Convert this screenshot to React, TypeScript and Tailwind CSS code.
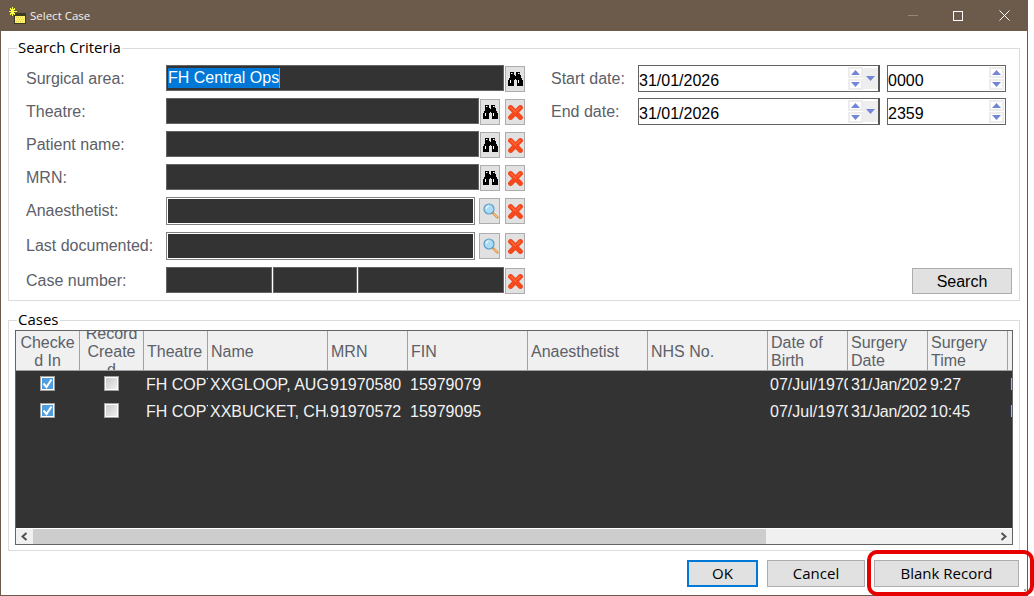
import type { ReactNode } from "react";

const arial = "font-['Liberation_Sans',Arial,sans-serif]";
const segoe = "font-['Open_Sans','Noto_Sans',sans-serif]";

const columns = [
  { label: "Checked In", width: "w-[64px]", center: true },
  { label: "Record Created", width: "w-[64px]", center: true },
  { label: "Theatre", width: "w-[64px]" },
  { label: "Name", width: "w-[120px]" },
  { label: "MRN", width: "w-[80px]" },
  { label: "FIN", width: "w-[120px]" },
  { label: "Anaesthetist", width: "w-[120px]" },
  { label: "NHS No.", width: "w-[120px]" },
  { label: "Date of Birth", width: "w-[80px]" },
  { label: "Surgery Date", width: "w-[80px]", cell: "mr-px w-[79px] pl-[3px] tracking-[-0.35px]" },
  { label: "Surgery Time", width: "w-[80px]" },
];

const rows = [
  ["FH COPT", "XXGLOOP, AUGUSTUS", "91970580", "15979079", "", "", "07/Jul/1970", "31/Jan/2026", "9:27"],
  ["FH COPT", "XXBUCKET, CHARLIE", "91970572", "15979095", "", "", "07/Jul/1970", "31/Jan/2026", "10:45"],
];

function Binoculars() {
  return (
    <svg width="15" height="14" viewBox="0 0 15 14" shapeRendering="crispEdges">
      <path
        fill="#000"
        d="M2 0h4v3h1v1h1V3h0V0h4v3h1v3h1v2h1v6H9V8H8V7H7v1H6v6H0V8h1V6h1z"
      />
      <path fill="#fff" d="M3 1h1v1H3zM10 1h1v1h-1zM2 8h1v3H2zM10 8h1v3h-1z" />
      <path fill="#8a6f9e" d="M4 1h1v1H4zM11 1h1v1h-1z" />
    </svg>
  );
}

function RedCross() {
  return (
    <svg width="15" height="15" viewBox="0 0 15 15">
      <path d="M2.6 2.6 12.4 12.4M12.4 2.6 2.6 12.4" stroke="#f4481e" strokeWidth="5" strokeLinecap="round" />
      <path d="M3 2.5 7.5 7M12 2.5 9 5.5" stroke="#ff6a3c" strokeWidth="1.2" strokeLinecap="round" />
    </svg>
  );
}

function Magnifier() {
  return (
    <svg className="ml-[2px]" width="16" height="16" viewBox="0 0 16 16">
      <path d="M9.8 9.8 14.3 14.3" stroke="#e39a4f" strokeWidth="2.6" strokeLinecap="round" />
      <path d="M11 11 14 14" stroke="#f7d9a0" strokeWidth="0.8" />
      <circle cx="6" cy="6" r="5" fill="#a9dcf6" stroke="#5f9cc4" strokeWidth="1.2" />
      <path d="M3.2 5.6a3 3 0 0 1 2.6-2.6" stroke="#fff" strokeWidth="1.2" fill="none" />
    </svg>
  );
}

function WindowIcon() {
  return (
    <svg width="18" height="18" viewBox="0 0 18 18" shapeRendering="crispEdges">
      <path fill="#3a3a22" d="M5 6h12v11H5z" />
      <path fill="#fff36a" d="M6 9h10v7H6z" />
      <path fill="#d9c94a" d="M7 10h1v1H7zM9 10h1v1H9zM11 10h1v1h-1zM13 10h1v1h-1zM8 12h1v1H8zM10 12h1v1h-1zM12 12h1v1h-1zM14 12h1v1h-1zM7 14h1v1H7zM9 14h1v1H9zM11 14h1v1h-1zM13 14h1v1h-1z" />
      <path fill="#fbff3c" d="M3 0h1v2h1V1h1v2H5v1h3v1H5v1h1v2H5V7H4v2H3V7H2v1H1V6h1V5H0V4h2V3H1V1h1v1h1z" />
    </svg>
  );
}

function Triangle({ down }: { down?: boolean }) {
  return (
    <svg width="9" height="5" viewBox="0 0 9 5">
      <path d={down ? "M0 0h9L4.5 5z" : "M4.5 0 9 5H0z"} fill="#7485d8" />
    </svg>
  );
}

function Spinner() {
  return (
    <div className="flex w-[15px] flex-col gap-px py-px">
      <div className="flex flex-1 items-center justify-center border-2 border-[#ececec] bg-white">
        <Triangle />
      </div>
      <div className="flex flex-1 items-center justify-center border-2 border-[#ececec] bg-white">
        <Triangle down />
      </div>
    </div>
  );
}

function IconButton({ wide, children }: { wide?: boolean; children: ReactNode }) {
  return (
    <div
      className={`mt-px flex h-[26px] ${wide ? "w-[21px]" : "w-5"} shrink-0 items-center justify-center border border-[#adadad] bg-[#e1e1e1]`}
    >
      {children}
    </div>
  );
}

function DarkField({ width, children }: { width: string; children?: ReactNode }) {
  return (
    <div className={`h-[26px] ${width} shrink-0 border border-[#646464] bg-[#333333] pl-px`}>{children}</div>
  );
}

function OutlinedField({ width }: { width: string }) {
  return (
    <div className={`h-[28px] ${width} shrink-0 border border-[#828282] bg-white p-px`}>
      <div className="h-full bg-[#333333]" />
    </div>
  );
}

function Row({ label, tall, children }: { label: string; tall?: boolean; children: ReactNode }) {
  return (
    <div className={`flex ${tall ? "h-[28px]" : "h-[26px]"} items-start`}>
      <div className={`w-[140px] shrink-0 ${tall ? "leading-[27px]" : "leading-[28px]"} text-[#5c6068]`}>{label}</div>
      {children}
    </div>
  );
}

function DateRow({ label, date, time }: { label: string; date: string; time: string }) {
  return (
    <div className="flex h-[27px] items-stretch">
      <div className="w-[87px] shrink-0 leading-[28px] text-[#5c6068]">{label}</div>
      <div className="flex w-[242px] border border-r-2 border-[#646464] border-r-[#555555] bg-white">
        <div className="flex-1 pt-[3px] leading-[24px] text-black">{date}</div>
        <Spinner />
        <div className="my-[2px] flex w-[15px] items-center justify-center bg-[#eeeeee]">
          <Triangle down />
        </div>
      </div>
      <div className="ml-[7px] flex w-[119px] border border-[#646464] bg-white pr-px">
        <div className="flex-1 pt-[3px] leading-[24px] text-black">{time}</div>
        <Spinner />
      </div>
    </div>
  );
}

function Legend({ children }: { children: ReactNode }) {
  return (
    <div className={`absolute top-[-12px] left-[8px] bg-white px-px text-[15px] leading-[20px] text-black ${segoe}`}>
      {children}
    </div>
  );
}

function CheckBox({ checked }: { checked?: boolean }) {
  return (
    <div className="mb-[2px] flex h-[15px] w-[15px] items-center justify-center border border-[#a0a0a0] bg-white p-px">
      <div
        className={`flex h-full w-full items-center justify-center ${
          checked ? "bg-[#4f9fe0]" : "bg-gradient-to-br from-[#c9c9c9] to-[#f0f0f0]"
        }`}
      >
        {checked && (
          <svg width="11" height="11" viewBox="0 0 11 11">
            <path d="M1.5 5.5 4.5 9 9.5 1.5" stroke="#fff" strokeWidth="2" fill="none" />
          </svg>
        )}
      </div>
    </div>
  );
}

function CasesTable() {
  return (
    <div className="flex h-[215px] w-[998px] flex-col overflow-hidden border border-[#646464] bg-[#333333]">
      {/* Header */}
      <div className="flex h-[40px] shrink-0 border-b border-[#a0a0a0] bg-[#f0f0f0]">
        {columns.map((col) => (
          <div
            key={col.label}
            className={`flex ${col.width} shrink-0 items-center overflow-hidden border-r border-[#a0a0a0] pt-[2px] ${
              col.center ? "justify-center px-[4px] text-center [overflow-wrap:anywhere]" : "pl-[3px]"
            } leading-[18px] text-[#5c6068]`}
          >
            <div className="min-w-0">{col.label}</div>
          </div>
        ))}
      </div>

      {/* Rows */}
      <div className="flex-1 overflow-hidden">
        {rows.map((row) => (
          <div key={row[1]} className="flex h-[27px] items-center whitespace-nowrap text-[#f2f2f2]">
            <div className="flex w-[64px] shrink-0 justify-center pr-[2px]">
              <CheckBox checked />
            </div>
            <div className="flex w-[64px] shrink-0 justify-center pr-[2px]">
              <CheckBox />
            </div>
            {columns.slice(2).map((col, i) => (
              <div key={col.label} className={`shrink-0 overflow-hidden ${col.cell ?? `${col.width} pl-[2px]`}`}>
                {row[i] || "\u00a0"}
              </div>
            ))}
            <div className="flex-1 overflow-hidden pl-[2px]">F</div>
          </div>
        ))}
      </div>

      {/* Scrollbar */}
      <div className="flex h-[16px] shrink-0 border-t border-white bg-[#f0f0f0]">
        <div className="flex w-[17px] items-center justify-center">
          <svg width="7" height="9" viewBox="0 0 7 9">
            <path d="M5.5 1 1.5 4.5 5.5 8" stroke="#505050" strokeWidth="2" fill="none" />
          </svg>
        </div>
        <div className="w-[733px] bg-[#cdcdcd]" />
        <div className="flex-1" />
        <div className="flex w-[17px] items-center justify-center">
          <svg width="7" height="9" viewBox="0 0 7 9">
            <path d="M1.5 1 5.5 4.5 1.5 8" stroke="#505050" strokeWidth="2" fill="none" />
          </svg>
        </div>
      </div>
    </div>
  );
}

export default function App() {
  return (
    <div className={`relative h-[596px] w-[1034px] overflow-hidden bg-white text-[16px] ${arial}`}>
      <div className="flex h-[596px] w-[1028px] flex-col border-x border-b border-[#6c5b4b]">
        {/* Title bar */}
        <div className="-mx-px flex h-[31px] shrink-0 items-center bg-[#6c5b4b] pl-[9px]">
          <WindowIcon />
          <span className={`ml-[3px] text-[11.5px] text-[#f4f1ee] ${segoe}`}>Select Case</span>
          <div className="ml-auto flex items-center gap-[35px] pr-[18px]">
            <div className="h-px w-[10px] bg-[#94877a]" />
            <div className="h-[10px] w-[10px] border border-white" />
            <svg className="ml-px" width="11" height="11" viewBox="0 0 11 11">
              <path d="M.5.5 10.5 10.5M10.5.5.5 10.5" stroke="#fff" strokeWidth="1" />
            </svg>
          </div>
        </div>

        <div className="ml-[7px] flex w-[1012px] flex-col pt-[17px]">
          {/* Search Criteria */}
          <div className="relative flex h-[253px] border border-[#dcdcdc] pt-4 pb-[6px] pl-[17px]">
            <Legend>Search Criteria</Legend>
            <div className="flex w-[499px] shrink-0 flex-col gap-[7px]">
              <Row label="Surgical area:">
                <DarkField width="w-[338px]">
                  <div className="mt-px inline-block h-5 border-r border-[#ff7a1a] bg-[#0078d7] leading-5 text-white">
                    FH Central Ops
                  </div>
                </DarkField>
                <div className="ml-px">
                  <IconButton>
                    <Binoculars />
                  </IconButton>
                </div>
              </Row>
              {["Theatre:", "Patient name:", "MRN:"].map((label) => (
                <Row key={label} label={label}>
                  <DarkField width="w-[313px]" />
                  <div className="ml-px flex gap-[5px]">
                    <IconButton>
                      <Binoculars />
                    </IconButton>
                    <IconButton>
                      <RedCross />
                    </IconButton>
                  </div>
                </Row>
              ))}
              {["Anaesthetist:", "Last documented:"].map((label) => (
                <Row key={label} label={label} tall>
                  <OutlinedField width="w-[309px]" />
                  <div className="ml-[4px] flex gap-[5px]">
                    <IconButton wide>
                      <Magnifier />
                    </IconButton>
                    <IconButton>
                      <RedCross />
                    </IconButton>
                  </div>
                </Row>
              ))}
              <Row label="Case number:">
                <div className="flex w-[338px] shrink-0 gap-px">
                  <div className="h-[26px] w-[106px] border border-[#646464] bg-[#333333]" />
                  <div className="h-[26px] w-[84px] border border-[#646464] bg-[#333333]" />
                  <div className="h-[26px] flex-1 border border-[#646464] bg-[#333333]" />
                </div>
                <div className="ml-px">
                  <IconButton>
                    <RedCross />
                  </IconButton>
                </div>
              </Row>
            </div>

            <div className="ml-[26px] flex flex-1 flex-col gap-[6px] pr-[6px]">
              <DateRow label="Start date:" date="31/01/2026" time="0000" />
              <DateRow label="End date:" date="31/01/2026" time="2359" />
              <div className="mt-auto flex justify-end pr-px">
                <div className="h-[26px] w-[100px] border border-[#adadad] bg-[#e1e1e1] text-center leading-[25px] text-black">
                  Search
                </div>
              </div>
            </div>
          </div>

          {/* Cases */}
          <div className="relative mt-[19px] h-[231px] border border-[#dcdcdc] pt-[9px] pl-[6px]">
            <Legend>Cases</Legend>
            <CasesTable />
          </div>

          {/* Dialog buttons */}
          <div className={`mt-[9px] flex justify-end gap-[9px] pr-px text-[15px] text-black ${segoe}`}>
            <div className="flex h-[27px] w-[71px] items-center justify-center border-2 border-[#0078d7] bg-[#e1e1e1]">
              OK
            </div>
            <div className="flex h-[27px] w-[98px] items-center justify-center border border-[#adadad] bg-[#e1e1e1]">
              Cancel
            </div>
            <div className="flex h-[27px] w-[145px] items-center justify-center border border-[#adadad] bg-[#e1e1e1]">
              Blank Record
            </div>
          </div>
        </div>
      </div>

      {/* Resize grip */}
      <div className="absolute right-[8px] bottom-[2px] grid grid-cols-3 gap-px">
        <div className="h-[1px] w-[1px]" />
        <div className="h-[1px] w-[1px]" />
        <div className="h-[2px] w-[2px] bg-[#a8a8a8]" />
        <div className="h-[1px] w-[1px]" />
        <div className="h-[2px] w-[2px] bg-[#a8a8a8]" />
        <div className="h-[2px] w-[2px] bg-[#a8a8a8]" />
      </div>

      {/* Red highlight around Blank Record */}
      <div className="absolute top-[550px] left-[867px] h-[46px] w-[167px] rounded-[10px] border-[4px] border-[#e60000]" />
    </div>
  );
}
